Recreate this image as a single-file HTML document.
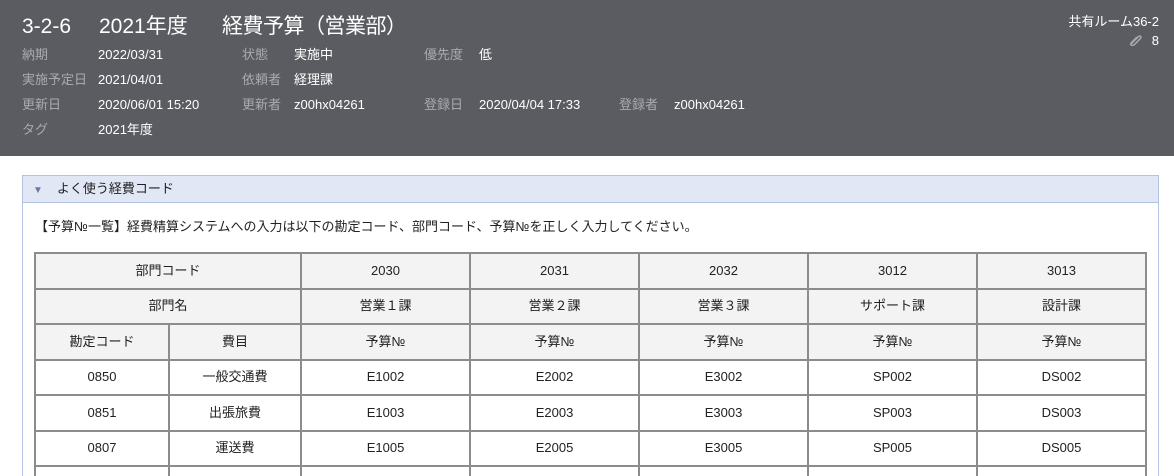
<!DOCTYPE html>
<html><head><meta charset="utf-8"><style>
*{margin:0;padding:0;box-sizing:border-box}
html,body{width:1174px;height:476px;overflow:hidden}
body{background:#fff;font-family:"Liberation Sans","Noto Sans CJK JP",sans-serif;font-size:13px;color:#222;position:relative}
.hd{position:absolute;left:0;top:0;width:1174px;height:156px;background:#5b5c61;color:#fff}
.hd .t{position:absolute;top:14px;font-size:21px;line-height:26px;white-space:nowrap}
.hd span{position:absolute;font-size:13px;line-height:16px;white-space:nowrap}
.l{color:#a9aaae}
.panel{position:absolute;left:22px;top:175px;width:1137px;height:301px;border:1px solid #b4c3e3;border-bottom:none;overflow:hidden}
.ph{height:27px;background:#e1e7f5;border-bottom:1px solid #b4c3e3;line-height:25px;padding-left:10px;font-size:13px}
.ph i{font-style:normal;color:#6b7aa0;font-size:10px;margin-right:14px}
.desc{position:absolute;left:12px;top:40px;font-size:13px}
table{position:absolute;left:11px;top:76px;border-collapse:collapse;width:1113px}
td{border:2px solid #8c8c8c;text-align:center;height:35.5px;font-size:13px;line-height:16px}
tr.h td{background:#f3f3f3}
</style></head><body>
<div class="hd">
<div class="t" style="left:22px">3-2-6</div>
<div class="t" style="left:99px">2021年度</div>
<div class="t" style="left:222px;letter-spacing:-0.5px">経費予算（営業部）</div>
<span class="l" style="left:22px;top:47px">納期</span><span style="left:98px;top:47px">2022/03/31</span>
<span class="l" style="left:242px;top:47px">状態</span><span style="left:294px;top:47px">実施中</span>
<span class="l" style="left:424px;top:47px">優先度</span><span style="left:479px;top:47px">低</span>
<span class="l" style="left:22px;top:72px">実施予定日</span><span style="left:98px;top:72px">2021/04/01</span>
<span class="l" style="left:242px;top:72px">依頼者</span><span style="left:294px;top:72px">経理課</span>
<span class="l" style="left:22px;top:97px">更新日</span><span style="left:98px;top:97px">2020/06/01 15:20</span>
<span class="l" style="left:242px;top:97px">更新者</span><span style="left:294px;top:97px">z00hx04261</span>
<span class="l" style="left:424px;top:97px">登録日</span><span style="left:479px;top:97px">2020/04/04 17:33</span>
<span class="l" style="left:619px;top:97px">登録者</span><span style="left:674px;top:97px">z00hx04261</span>
<span class="l" style="left:22px;top:122px">タグ</span><span style="left:98px;top:122px">2021年度</span>
<span style="right:15px;top:14px">共有ルーム36-2</span>
<span style="right:15px;top:33px"><svg width="14" height="12" viewBox="0 0 14 12" style="vertical-align:-1px;margin-right:10px"><path d="M3 10 L10 3 Q12 1 13 3 Q13 4 11 6 L6 11 Q4 12 3 11 Q2 10 4 8 L9 3" fill="none" stroke="#aaa" stroke-width="1.5"/></svg>8</span>
</div>
<div class="panel">
<div class="ph"><i>▼</i>よく使う経費コード</div>
<div class="desc">【予算№一覧】経費精算システムへの入力は以下の勘定コード、部門コード、予算№を正しく入力してください。</div>
<table>
<colgroup><col style="width:134px"><col style="width:132px"><col style="width:169px"><col style="width:169px"><col style="width:169px"><col style="width:169px"><col style="width:169px"></colgroup>
<tr class="h"><td colspan="2">部門コード</td><td>2030</td><td>2031</td><td>2032</td><td>3012</td><td>3013</td></tr>
<tr class="h"><td colspan="2">部門名</td><td>営業１課</td><td>営業２課</td><td>営業３課</td><td>サポート課</td><td>設計課</td></tr>
<tr class="h"><td>勘定コード</td><td>費目</td><td>予算№</td><td>予算№</td><td>予算№</td><td>予算№</td><td>予算№</td></tr>
<tr><td>0850</td><td>一般交通費</td><td>E1002</td><td>E2002</td><td>E3002</td><td>SP002</td><td>DS002</td></tr>
<tr><td>0851</td><td>出張旅費</td><td>E1003</td><td>E2003</td><td>E3003</td><td>SP003</td><td>DS003</td></tr>
<tr><td>0807</td><td>運送費</td><td>E1005</td><td>E2005</td><td>E3005</td><td>SP005</td><td>DS005</td></tr>
<tr><td>&nbsp;</td><td></td><td></td><td></td><td></td><td></td><td></td></tr>
</table>
</div>
</body></html>
